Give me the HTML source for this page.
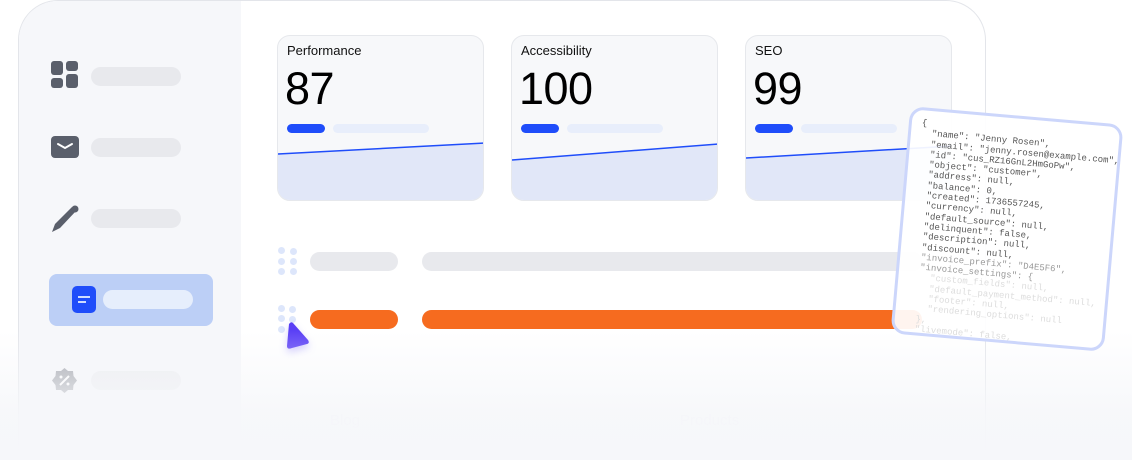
<!DOCTYPE html>
<html style="width:1132px;height:460px;overflow:hidden"><head><style>
*{margin:0;padding:0;box-sizing:border-box}
body{width:1132px;height:460px;overflow:hidden;background:#fff;font-family:"Liberation Sans",sans-serif;position:relative}
.abs{position:absolute}
.frame{left:18px;top:0;width:968px;height:460px;border:1.5px solid #e3e5ea;border-bottom:none;border-radius:40px 40px 0 0;overflow:hidden;background:#fff}
.side{left:0;top:0;width:222px;height:460px;background:#f6f7fa}
.pill{position:absolute;height:19px;border-radius:10px;background:#e8e9ed}
.card{position:absolute;top:35px;width:207px;height:166px;border:1px solid #e6e8ec;border-radius:13px;background:#f7f8fa;overflow:hidden}
.card .l{position:absolute;left:9px;top:7px;font-size:13px;color:#111}
.card .n{position:absolute;left:7px;top:27px;font-size:45px;color:#000;letter-spacing:-0.5px}
.card .b1{position:absolute;left:9px;top:88px;width:38px;height:9px;border-radius:5px;background:#1f4dfa}
.card .b2{position:absolute;left:55px;top:88px;width:96px;height:9px;border-radius:5px;background:#e8eefb}
.card svg{position:absolute;left:0;top:0}
.dot{position:absolute;width:7px;height:7px;border-radius:50%;background:#dde6fb}
.fade{left:0;top:330px;width:1132px;height:130px;background:linear-gradient(rgba(255,255,255,0),rgba(246,247,250,.92) 65%,#f6f7fa)}
.json{left:900px;top:115px;width:214px;height:228px;border:3px solid #ccd6fb;border-radius:14px;background:rgba(255,255,255,.93);transform:rotate(5deg);transform-origin:center;overflow:hidden}
.json pre{font-family:"Liberation Mono",monospace;font-size:9px;line-height:10.3px;color:#555;padding:8px 0 0 10px}
</style></head><body>
<div class="abs frame">
  <div class="abs side">
    <svg class="abs" style="left:32px;top:60px" width="28" height="28" viewBox="0 0 28 28"><rect x="0" y="0" width="12" height="14" rx="3" fill="#5a5f6b"/><rect x="15" y="0" width="12" height="10" rx="3" fill="#5a5f6b"/><rect x="0" y="17" width="12" height="10" rx="3" fill="#5a5f6b"/><rect x="15" y="13" width="12" height="14" rx="3" fill="#5a5f6b"/></svg>
    <div class="pill" style="left:72px;top:66px;width:90px"></div>
    <svg class="abs" style="left:32px;top:135px" width="28" height="23" viewBox="0 0 28 23"><rect width="28" height="22" rx="4" fill="#5a5f6b"/><path d="M7 8 L14 12 L21 8" stroke="#fff" stroke-width="2" fill="none" stroke-linecap="round"/></svg>
    <div class="pill" style="left:72px;top:137px;width:90px"></div>
    <svg class="abs" style="left:32px;top:203px" width="28" height="29" viewBox="0 0 28 29"><path d="M21 3 L25 7 L9 24 L1 28 L4 20 Z" fill="#5a5f6b"/><circle cx="24" cy="5" r="3.5" fill="#5a5f6b"/></svg>
    <div class="pill" style="left:72px;top:208px;width:90px"></div>
    <div class="abs" style="left:30px;top:273px;width:164px;height:52px;border-radius:8px;background:#bccff6"></div>
    <div class="abs" style="left:53px;top:285px;width:24px;height:27px;border-radius:5px;background:#1f4dfa"></div>
    <div class="abs" style="left:59px;top:295px;width:12px;height:2px;background:#cfdcff"></div>
    <div class="abs" style="left:59px;top:300px;width:8px;height:2px;background:#cfdcff"></div>
    <div class="pill" style="left:84px;top:289px;width:90px;background:#e6eefc"></div>
    <svg class="abs" style="left:32px;top:366px" width="27" height="27" viewBox="0 0 27 27"><path d="M13.5 1 L17 4 L22 4 L22.5 9 L26 13.5 L22.5 18 L22 23 L17 23 L13.5 26 L10 23 L5 23 L4.5 18 L1 13.5 L4.5 9 L5 4 L10 4 Z" fill="#9a9da5"/><path d="M9 18 L18 9" stroke="#fff" stroke-width="2"/><circle cx="10" cy="10" r="1.5" fill="#fff"/><circle cx="17" cy="17" r="1.5" fill="#fff"/></svg>
    <div class="pill" style="left:72px;top:370px;width:90px;background:#ecedf0"></div>
  </div>
</div>
<div class="card" style="left:277px"><div class="l">Performance</div><div class="n">87</div><div class="b1"></div><div class="b2"></div>
<svg width="207" height="166"><path d="M0 118 L207 107 L207 166 L0 166Z" fill="#e1e7f8"/><path d="M0 118 L207 107" stroke="#1f4dfa" stroke-width="1.5"/></svg></div>
<div class="card" style="left:511px"><div class="l">Accessibility</div><div class="n">100</div><div class="b1"></div><div class="b2"></div>
<svg width="207" height="166"><path d="M0 124 L207 108 L207 166 L0 166Z" fill="#e1e7f8"/><path d="M0 124 L207 108" stroke="#1f4dfa" stroke-width="1.5"/></svg></div>
<div class="card" style="left:745px"><div class="l">SEO</div><div class="n">99</div><div class="b1"></div><div class="b2"></div>
<svg width="207" height="166"><path d="M0 122 L207 110 L207 166 L0 166Z" fill="#e1e7f8"/><path d="M0 122 L207 110" stroke="#1f4dfa" stroke-width="1.5"/></svg></div>

<div class="dot" style="left:278px;top:247px"></div><div class="dot" style="left:290px;top:248px"></div>
<div class="dot" style="left:278px;top:258px"></div><div class="dot" style="left:290px;top:258px"></div>
<div class="dot" style="left:278px;top:268px"></div><div class="dot" style="left:290px;top:268px"></div>
<div class="abs" style="left:310px;top:252px;width:88px;height:19px;border-radius:10px;background:#e8e9ed"></div>
<div class="abs" style="left:422px;top:252px;width:500px;height:19px;border-radius:10px;background:#e8e9ed"></div>
<div class="dot" style="left:278px;top:305px"></div><div class="dot" style="left:289px;top:306px"></div>
<div class="dot" style="left:278px;top:315px"></div><div class="dot" style="left:289px;top:316px"></div>
<div class="dot" style="left:278px;top:326px"></div>
<div class="abs" style="left:310px;top:310px;width:88px;height:19px;border-radius:10px;background:#f66b1f"></div>
<div class="abs" style="left:422px;top:310px;width:500px;height:19px;border-radius:10px;background:#f66b1f"></div>
<svg class="abs" style="left:283px;top:320px;filter:drop-shadow(0 4px 4px rgba(90,70,250,.3))" width="28" height="32" viewBox="0 0 28 32"><path d="M6 4 Q8 1 10 3 L25 20 Q27 23 24 24 L9 28 Q4 30 4 26 Z" fill="#5a3ff5"/></svg>

<div class="abs" style="left:330px;top:412px;font-size:15px;color:#e9eaee">Blog</div>
<div class="abs" style="left:680px;top:412px;font-size:15px;color:#e9eaee">Products</div>
<div class="abs fade"></div>

<div class="abs json"><pre>{
  "name": "Jenny Rosen",
  "email": "jenny.rosen@example.com",
  "id": "cus_RZ16GnL2HmGoPw",
  "object": "customer",
  "address": null,
  "balance": 0,
  "created": 1736557245,
  "currency": null,
  "default_source": null,
  "delinquent": false,
  "description": null,
  "discount": null,
<span style="color:#999">  "invoice_prefix": "D4E5F6",
  "invoice_settings": {</span>
<span style="color:#ddd">    "custom_fields": null,
    "default_payment_method": null,
    "footer": null,
    "rendering_options": null
  },
  "livemode": false,</span></pre></div>
</body></html>
